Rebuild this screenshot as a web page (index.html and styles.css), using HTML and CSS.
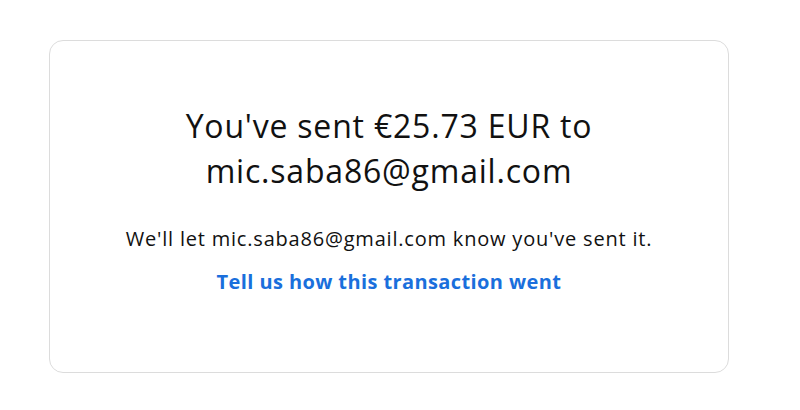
FILE: index.html
```html
<!DOCTYPE html>
<html>
<head>
<meta charset="utf-8">
<link rel="stylesheet" href="styles.css">
</head>
<body>
<div class="page">
  <div class="card">
    <h1 class="title">You've sent €25.73 EUR to<br>mic.saba86@gmail.com</h1>
    <p class="note">We'll let mic.saba86@gmail.com know you've sent it.</p>
    <a class="link" href="#">Tell us how this transaction went</a>
  </div>
</div>
</body>
</html>
```
FILE: styles.css
```css
html, body {
  margin: 0;
  padding: 0;
  background: #ffffff;
}
.page {
  padding: 40px 0 0 49px;
}
.card {
  box-sizing: border-box;
  width: 680px;
  height: 333px;
  border: 1px solid #dcdcdc;
  border-radius: 14px;
  display: flex;
  flex-direction: column;
  align-items: center;
  padding-top: 62px;
  font-family: "Open Sans", "Noto Sans", sans-serif;
  color: #111;
  text-align: center;
}
.title {
  margin: 0;
  font-size: 32px;
  font-weight: 400;
  line-height: 45px;
  letter-spacing: 0.8px;
}
.note {
  margin: 33px 0 0;
  font-size: 20px;
  line-height: 26px;
  letter-spacing: 0.8px;
}
.link {
  margin-top: 17px;
  font-size: 20px;
  font-weight: 700;
  line-height: 26px;
  letter-spacing: 0.4px;
  color: #1a6fdc;
  text-decoration: none;
}
```
